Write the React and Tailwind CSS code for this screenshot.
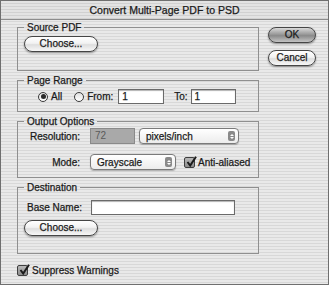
const stripes =
  "bg-[repeating-linear-gradient(180deg,#e9e9e9_0px,#e9e9e9_2px,#d8d8d8_2px,#d8d8d8_3px)]";

function AquaButton({ children, className = "", dark = false }) {
  return (
    <button
      className={
        "flex h-[16px] items-center justify-center rounded-full border border-[#454545] text-[10px] leading-none shadow-[0_1px_2px_rgba(0,0,0,0.4)] " +
        (dark
          ? "bg-[linear-gradient(180deg,#d8d8d8_0%,#9a9a9a_45%,#8a8a8a_55%,#c4c4c4_100%)] "
          : "bg-[linear-gradient(180deg,#ffffff_0%,#f2f2f2_45%,#dedede_55%,#f7f7f7_100%)] ") +
        className
      }
    >
      {children}
    </button>
  );
}

function Radio({ checked }) {
  return (
    <span className="flex h-[10px] w-[10px] items-center justify-center rounded-full border-[1.5px] border-[#3a3a3a] bg-[linear-gradient(180deg,#e0e0e0,#ffffff)]">
      {checked && <span className="h-[5px] w-[5px] rounded-full bg-[#2a2a2a]" />}
    </span>
  );
}

function Check() {
  return (
    <span className="relative flex h-[11px] w-[11px] items-center justify-center rounded-[2px] border border-[#3f3f3f] bg-[linear-gradient(180deg,#b8b8b8,#8c8c8c)]">
      <svg width="11" height="11" viewBox="0 0 11 11" className="absolute -top-[2px] left-[1px]">
        <path d="M1.5 6 L4.2 9.5 L10 0.8" fill="none" stroke="#1a1a1a" strokeWidth="2" />
      </svg>
    </span>
  );
}

function Popup({ label, className = "" }) {
  return (
    <div
      className={
        "flex h-[16px] items-center rounded-[4px] border border-[#7a7a7a] bg-[linear-gradient(180deg,#ffffff,#ececec)] shadow-[0_1px_1px_rgba(0,0,0,0.25)] " +
        className
      }
    >
      <span className="flex-1 pl-[6px] text-[10px]">{label}</span>
      <span className="mr-[3px] flex h-[10px] w-[7px] flex-col items-center justify-center gap-[1px] rounded-[2px] bg-[#8a8a8a]">
        <span className="h-0 w-0 border-x-[2px] border-b-[2px] border-x-transparent border-b-white" />
        <span className="h-0 w-0 border-x-[2px] border-t-[2px] border-x-transparent border-t-white" />
      </span>
    </div>
  );
}

function Group({ title, className = "", children }) {
  return (
    <fieldset className={"border border-[#8f8f8f] pl-[6px] " + className}>
      <legend className="px-[3px] text-[10px] leading-[11px]">{title}</legend>
      {children}
    </fieldset>
  );
}

function TextBox({ value, className = "" }) {
  return (
    <div
      className={
        "h-[15px] border border-[#6a6a6a] bg-white pl-[3px] text-[10px] leading-[13px] shadow-[inset_0_1px_1px_rgba(0,0,0,0.3)] " +
        className
      }
    >
      {value}
    </div>
  );
}

export default function App() {
  return (
    <div
      className={
        "h-[285px] w-[329px] overflow-hidden whitespace-nowrap border border-[#6f6f6f] font-['Liberation_Sans',Arial,sans-serif] text-[10px] text-[#1b1b1b] [-webkit-text-stroke:0.25px_#1b1b1b] " +
        stripes
      }
    >
      <div className="h-[19px] border-b border-[#8c8c8c] bg-[repeating-linear-gradient(180deg,#e3e3e3_0px,#e3e3e3_2px,#d1d1d1_2px,#d1d1d1_3px)] text-center text-[10.5px] leading-[18px]">
        Convert Multi-Page PDF to PSD
      </div>
      <div className="flex pl-[16px] pt-[2px]">
        <div className="flex w-[242px] flex-col">
          <Group title="Source PDF" className="pb-[18px]">
            <AquaButton className="mt-[3px] w-[74px]">Choose...</AquaButton>
          </Group>

          <Group title="Page Range" className="mt-[4px] pb-[7px]">
            <div className="mt-[3px] flex items-center">
              <span className="ml-[14px]">
                <Radio checked />
              </span>
              <span className="ml-[3px]">All</span>
              <span className="ml-[12px]">
                <Radio />
              </span>
              <span className="ml-[3px]">From:</span>
              <TextBox value="1" className="ml-[5px] w-[46px]" />
              <span className="ml-[10px]">To:</span>
              <TextBox value="1" className="ml-[3px] w-[45px]" />
            </div>
          </Group>

          <Group title="Output Options" className="mt-[4px] pb-[7px]">
            <div className="mt-[1px] flex items-center">
              <span className="w-[56px] text-right">Resolution:</span>
              <div className="ml-[10px] h-[16px] w-[45px] border border-[#8a8a8a] bg-[#a9a9a9] pl-[4px] leading-[14px] text-[#5a5a5a] [-webkit-text-stroke:0px]">
                72
              </div>
              <Popup label="pixels/inch" className="ml-[4px] w-[100px]" />
            </div>
            <div className="mt-[10px] flex items-center">
              <span className="w-[56px] text-right">Mode:</span>
              <Popup label="Grayscale" className="ml-[10px] w-[86px]" />
              <span className="ml-[8px]">
                <Check />
              </span>
              <span className="ml-[3px]">Anti-aliased</span>
            </div>
          </Group>

          <Group title="Destination" className="mt-[4px] pb-[17px]">
            <div className="mt-[7px] flex items-center">
              <span className="ml-[3px] w-[56px]">Base Name:</span>
              <TextBox value="" className="ml-[8px] h-[14px] w-[144px]" />
            </div>
            <AquaButton className="mt-[5px] w-[74px]">Choose...</AquaButton>
          </Group>

          <div className="mt-[9px] flex items-center">
            <Check />
            <span className="ml-[4px]">Suppress Warnings</span>
          </div>
        </div>

        <div className="ml-[9px] mt-[5px] flex flex-col gap-[7px]">
          <AquaButton dark className="w-[48px]">
            OK
          </AquaButton>
          <AquaButton className="w-[48px]">Cancel</AquaButton>
        </div>
      </div>
    </div>
  );
}
